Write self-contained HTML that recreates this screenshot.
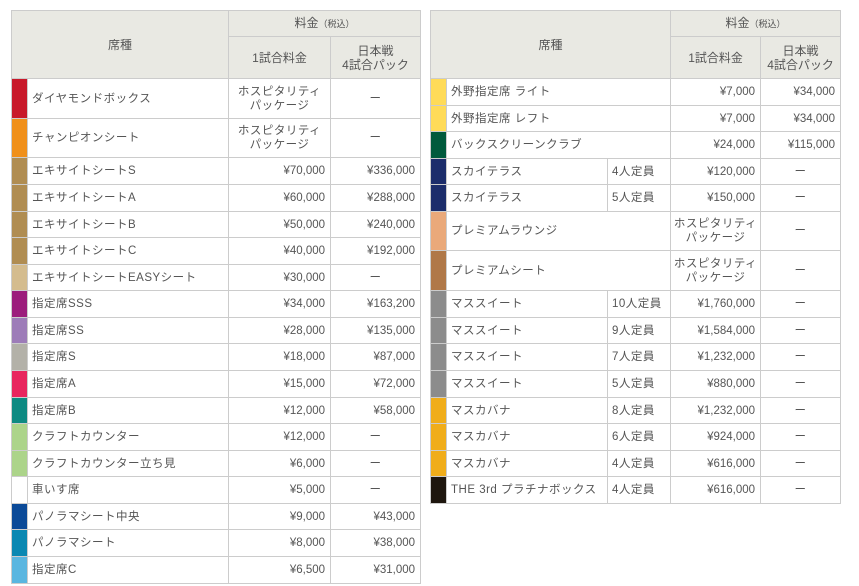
<!DOCTYPE html>
<html><head><meta charset="utf-8"><style>
html,body{margin:0;padding:0;background:#fff;width:859px;height:586px;overflow:hidden}
body{font-family:"Liberation Sans","Noto Sans CJK JP",sans-serif;font-size:11.5px;color:#555}
table{position:absolute;top:10px;border-collapse:collapse;table-layout:fixed}
td,th{border:1px solid #ccc;padding:0;font-weight:normal;line-height:14px}
th{background:#e9e9e3;text-align:center;color:#555;font-size:12px}
td.n{padding-left:4px;text-align:left;white-space:nowrap;letter-spacing:0.5px}
td.p{text-align:right;padding-right:5px}
td.c{text-align:center;letter-spacing:0.5px}
td.s{padding:0}
.sm{font-size:9px}
</style></head><body>
<table style="left:11px;width:409px">
<colgroup><col style="width:16px"><col style="width:201px"><col style="width:102px"><col style="width:90px"></colgroup>
<tr style="height:26px"><th colspan="2" rowspan="2">席種</th><th colspan="2">料金<span class="sm">（税込）</span></th></tr>
<tr style="height:42px"><th>1試合料金</th><th>日本戦<br>4試合パック</th></tr>
<tr style="height:40px"><td style="background:#c8192a"></td><td class="n">ダイヤモンドボックス</td><td class="c">ホスピタリティ<br>パッケージ</td><td class="c">ー</td></tr>
<tr style="height:39px"><td style="background:#f0901a"></td><td class="n">チャンピオンシート</td><td class="c">ホスピタリティ<br>パッケージ</td><td class="c">ー</td></tr>
<tr style="height:27px"><td style="background:#b08d52"></td><td class="n">エキサイトシートS</td><td class="p">¥70,000</td><td class="p">¥336,000</td></tr>
<tr style="height:27px"><td style="background:#b08d52"></td><td class="n">エキサイトシートA</td><td class="p">¥60,000</td><td class="p">¥288,000</td></tr>
<tr style="height:26px"><td style="background:#b08d52"></td><td class="n">エキサイトシートB</td><td class="p">¥50,000</td><td class="p">¥240,000</td></tr>
<tr style="height:27px"><td style="background:#b08d52"></td><td class="n">エキサイトシートC</td><td class="p">¥40,000</td><td class="p">¥192,000</td></tr>
<tr style="height:26px"><td style="background:#d4bc8e"></td><td class="n">エキサイトシートEASYシート</td><td class="p">¥30,000</td><td class="c">ー</td></tr>
<tr style="height:27px"><td style="background:#9c1d7c"></td><td class="n">指定席SSS</td><td class="p">¥34,000</td><td class="p">¥163,200</td></tr>
<tr style="height:26px"><td style="background:#9d7cb8"></td><td class="n">指定席SS</td><td class="p">¥28,000</td><td class="p">¥135,000</td></tr>
<tr style="height:27px"><td style="background:#b3b1a8"></td><td class="n">指定席S</td><td class="p">¥18,000</td><td class="p">¥87,000</td></tr>
<tr style="height:27px"><td style="background:#e8265e"></td><td class="n">指定席A</td><td class="p">¥15,000</td><td class="p">¥72,000</td></tr>
<tr style="height:26px"><td style="background:#0e8a82"></td><td class="n">指定席B</td><td class="p">¥12,000</td><td class="p">¥58,000</td></tr>
<tr style="height:27px"><td style="background:#acd48a"></td><td class="n">クラフトカウンター</td><td class="p">¥12,000</td><td class="c">ー</td></tr>
<tr style="height:26px"><td style="background:#acd48a"></td><td class="n">クラフトカウンター立ち見</td><td class="p">¥6,000</td><td class="c">ー</td></tr>
<tr style="height:27px"><td style="background:#fff"></td><td class="n">車いす席</td><td class="p">¥5,000</td><td class="c">ー</td></tr>
<tr style="height:26px"><td style="background:#0b4a98"></td><td class="n">パノラマシート中央</td><td class="p">¥9,000</td><td class="p">¥43,000</td></tr>
<tr style="height:27px"><td style="background:#0a88b2"></td><td class="n">パノラマシート</td><td class="p">¥8,000</td><td class="p">¥38,000</td></tr>
<tr style="height:27px"><td style="background:#5ab6e0"></td><td class="n">指定席C</td><td class="p">¥6,500</td><td class="p">¥31,000</td></tr>
</table>
<table style="left:430px;width:410px">
<colgroup><col style="width:16px"><col style="width:161px"><col style="width:63px"><col style="width:90px"><col style="width:80px"></colgroup>
<tr style="height:26px"><th colspan="3" rowspan="2">席種</th><th colspan="2">料金<span class="sm">（税込）</span></th></tr>
<tr style="height:42px"><th>1試合料金</th><th>日本戦<br>4試合パック</th></tr>
<tr style="height:27px"><td style="background:#ffdb58"></td><td class="n" colspan="2">外野指定席 ライト</td><td class="p">¥7,000</td><td class="p">¥34,000</td></tr>
<tr style="height:26px"><td style="background:#ffdb58"></td><td class="n" colspan="2">外野指定席 レフト</td><td class="p">¥7,000</td><td class="p">¥34,000</td></tr>
<tr style="height:27px"><td style="background:#005a3c"></td><td class="n" colspan="2">バックスクリーンクラブ</td><td class="p">¥24,000</td><td class="p">¥115,000</td></tr>
<tr style="height:26px"><td style="background:#1c2d6b"></td><td class="n">スカイテラス</td><td class="n">4人定員</td><td class="p">¥120,000</td><td class="c">ー</td></tr>
<tr style="height:27px"><td style="background:#1c2d6b"></td><td class="n">スカイテラス</td><td class="n">5人定員</td><td class="p">¥150,000</td><td class="c">ー</td></tr>
<tr style="height:39px"><td style="background:#eaa97a"></td><td class="n" colspan="2">プレミアムラウンジ</td><td class="c">ホスピタリティ<br>パッケージ</td><td class="c">ー</td></tr>
<tr style="height:40px"><td style="background:#b07848"></td><td class="n" colspan="2">プレミアムシート</td><td class="c">ホスピタリティ<br>パッケージ</td><td class="c">ー</td></tr>
<tr style="height:27px"><td style="background:#8c8c8c"></td><td class="n">マススイート</td><td class="n">10人定員</td><td class="p">¥1,760,000</td><td class="c">ー</td></tr>
<tr style="height:26px"><td style="background:#8c8c8c"></td><td class="n">マススイート</td><td class="n">9人定員</td><td class="p">¥1,584,000</td><td class="c">ー</td></tr>
<tr style="height:27px"><td style="background:#8c8c8c"></td><td class="n">マススイート</td><td class="n">7人定員</td><td class="p">¥1,232,000</td><td class="c">ー</td></tr>
<tr style="height:27px"><td style="background:#8c8c8c"></td><td class="n">マススイート</td><td class="n">5人定員</td><td class="p">¥880,000</td><td class="c">ー</td></tr>
<tr style="height:26px"><td style="background:#f0ad1a"></td><td class="n">マスカバナ</td><td class="n">8人定員</td><td class="p">¥1,232,000</td><td class="c">ー</td></tr>
<tr style="height:27px"><td style="background:#f0ad1a"></td><td class="n">マスカバナ</td><td class="n">6人定員</td><td class="p">¥924,000</td><td class="c">ー</td></tr>
<tr style="height:26px"><td style="background:#f0ad1a"></td><td class="n">マスカバナ</td><td class="n">4人定員</td><td class="p">¥616,000</td><td class="c">ー</td></tr>
<tr style="height:27px"><td style="background:#1e160e"></td><td class="n">THE 3rd プラチナボックス</td><td class="n">4人定員</td><td class="p">¥616,000</td><td class="c">ー</td></tr>
</table>
</body></html>
